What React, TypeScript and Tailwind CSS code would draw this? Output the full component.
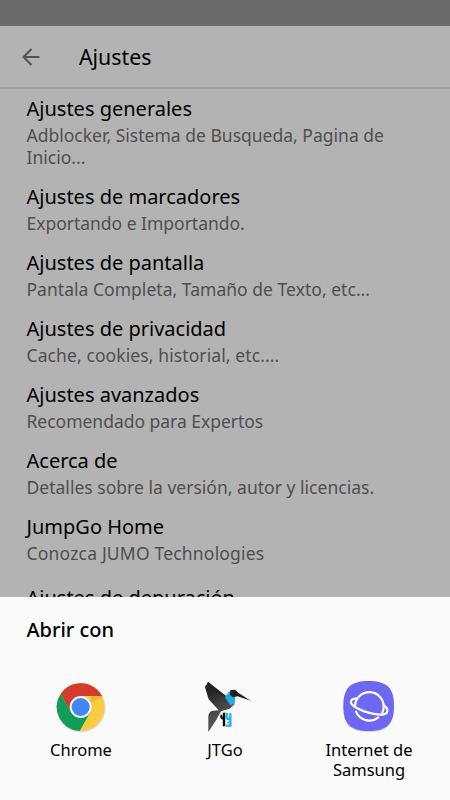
import React from "react";

const ajustes = [
    { titulo: "Ajustes generales", detalle: "Adblocker, Sistema de Busqueda, Pagina de Inicio...", ancho: "tracking-[0.01px]" },
    { titulo: "Ajustes de marcadores", detalle: "Exportando e Importando.", ancho: "tracking-[-0.02px]" },
    { titulo: "Ajustes de pantalla", detalle: "Pantala Completa, Tamaño de Texto, etc...", ancho: "tracking-[0.03px]" },
    { titulo: "Ajustes de privacidad", detalle: "Cache, cookies, historial, etc....", ancho: "tracking-[0.1px]" },
    { titulo: "Ajustes avanzados", detalle: "Recomendado para Expertos", ancho: "tracking-[-0.02px]" },
    { titulo: "Acerca de", detalle: "Detalles sobre la versión, autor y licencias.", ancho: "tracking-[0.02px]" },
    { titulo: "JumpGo Home", detalle: "Conozca JUMO Technologies", ancho: "tracking-[0.19px]" },
];

const ChromeIcon = () => (
    <svg className="mr-[2px] h-[65px] w-[70px]" viewBox="0 0 210 195" fill="none">
        <circle cx="108" cy="99" r="73" fill="#000" opacity=".12" />
        <circle cx="107" cy="96" r="72" fill="#fbcb43" />
        <path d="M107 96V63h64A72 72 0 0 0 47 57l31 55Z" fill="#d33b2d" />
        <path d="M47 57a72 72 0 0 0 57 111l32-56-29-16-29 16Z" fill="#109d58" />
        <path d="M139 63h32l2 5-38 14Z" fill="#d6a12d" opacity=".45" />
        <circle cx="107" cy="96" r="33" fill="#f3f3f3" />
        <circle cx="107" cy="96" r="27" fill="#4285f4" />
    </svg>
);

const JTGoIcon = () => (
    <svg className="h-[65px] w-[70px]" viewBox="0 0 210 195" fill="none">
        <defs>
            <linearGradient id="ala" x1="55" y1="30" x2="95" y2="115" gradientUnits="userSpaceOnUse">
                <stop stopColor="#191919" />
                <stop offset="1" stopColor="#505050" />
            </linearGradient>
        </defs>
        <path d="M53 20 108 62 134 87 119 101 93 109 80 133 55 171V124q1-15 14-17l17-1-30-33-12-40 9 6Z" fill="url(#ala)" />
        <path d="m45 35 63 31-53-45Z" fill="#222" />
        <path d="m118 48 18 20-2 18-13 5-16-24Z" fill="#20acdf" />
        <path d="m121 45 14-1 12 11 35 22-39-13-14 3-9-7Z" fill="#202020" />
        <path d="M94 119v8q0 4 10 4" stroke="#050505" strokeWidth="6" />
        <path d="M102 113v41" stroke="#050505" strokeWidth="7" />
        <path d="M110 113v15q0 4 11 4m0-17v37h-14" stroke="#22b2e8" strokeWidth="7" />
        <path d="m112 145 10-8" stroke="#22b2e8" strokeWidth="4" />
    </svg>
);

const SamsungIcon = () => (
    <svg className="ml-[2px] h-[65px] w-[70px]" viewBox="0 0 210 195" fill="none">
        <path d="M101 21c55 0 76 21 76 75s-21 75-76 75-76-21-76-75 21-75 76-75Z" fill="#000" opacity=".12" />
        <path d="M101 18c55 0 76 21 76 75s-21 75-76 75-76-21-76-75 21-75 76-75Z" fill="#6d68f2" />
        <path d="M60 93a43 43 0 0 1 86 3q0 9-4 17M63 110a43 43 0 0 0 67 17" stroke="#fff" strokeWidth="6.5" strokeLinecap="round" />
        <path d="M63 70c-18 2-20 14-7 23 22 16 67 29 90 25 16-3 14-18 1-27" stroke="#fff" strokeWidth="6.5" strokeLinecap="round" />
    </svg>
);

export default function App() {
    return (
        <div className="flex h-[800px] w-[450px] flex-col overflow-hidden bg-[#b3b3b3] font-['Noto_Sans',sans-serif] text-black">
            <div className="h-[26px] shrink-0 bg-[#6a6a6a]" />
            {/* Barra superior */}
            <header className="flex h-[63px] shrink-0 items-center border-b-2 border-[#9f9f9f] pl-[21px]">
                <svg className="mt-px h-5 w-5" viewBox="0 0 20 20" fill="none" stroke="#535353" strokeWidth="2">
                    <path d="M18.5 10H2.5M10.5 2 2.5 10l8 8" />
                </svg>
                <h1 className="ml-[38px] mt-px text-[21.3px] leading-[28px]">Ajustes</h1>
            </header>

            <main className="flex-1 overflow-hidden pl-[26.5px] pr-[27px] pt-[6px]">
                {ajustes.map((a) => (
                    <div key={a.titulo} className="pb-[15px]">
                        <h2 className="text-[20px] leading-[28px]">{a.titulo}</h2>
                        <p className={`pt-px text-[17.5px] leading-[22px] text-[#4f4f4f] ${a.ancho}`}>{a.detalle}</p>
                    </div>
                ))}
                <h2 className="pt-[5px] text-[20px] leading-[28px]">Ajustes de depuración</h2>
            </main>

            {/* Selector de aplicaciones */}
            <section className="h-[203px] shrink-0 bg-[#fafafa] pt-[19px]">
                <h2 className="pl-[26.5px] text-[20px] font-medium leading-[28px]">Abrir con</h2>
                <div className="grid grid-cols-[144px_144px_144px] pl-[9px] pt-[31px] text-center text-[16.5px] leading-[20px]">
                    <div className="flex flex-col items-center">
                        <ChromeIcon />
                        <span>Chrome</span>
                    </div>
                    <div className="flex flex-col items-center">
                        <JTGoIcon />
                        <span>JTGo</span>
                    </div>
                    <div className="flex flex-col items-center">
                        <SamsungIcon />
                        <span className="w-[100px]">Internet de Samsung</span>
                    </div>
                </div>
            </section>
        </div>
    );
}
